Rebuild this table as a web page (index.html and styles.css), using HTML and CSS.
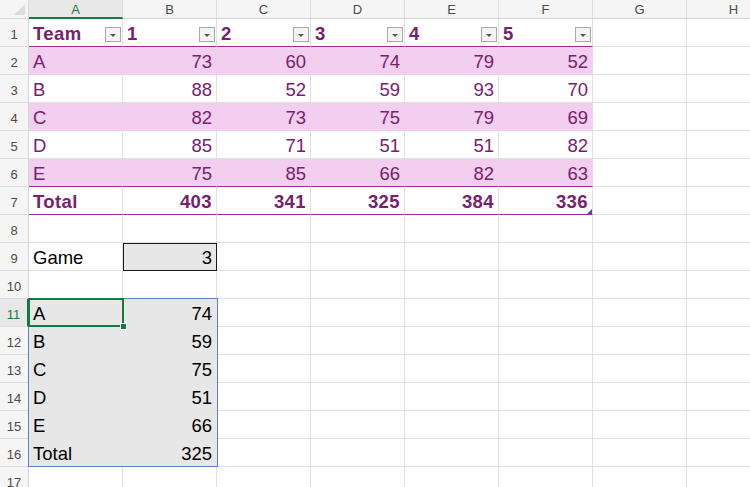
FILE: index.html
```html
<!DOCTYPE html>
<html>
<head>
<meta charset="utf-8">
<link rel="stylesheet" href="styles.css">
</head>
<body>
<div class="sheet">
  <div class="corner"><span class="corner-tri"></span></div>
  <div class="ch sel-col">A</div><div class="ch">B</div><div class="ch">C</div><div class="ch">D</div><div class="ch">E</div><div class="ch">F</div><div class="ch">G</div><div class="ch">H</div>

  <div class="rh">1</div>
  <div class="c th"><span>Team</span><span class="fb"></span></div>
  <div class="c th"><span>1</span><span class="fb"></span></div>
  <div class="c th"><span>2</span><span class="fb"></span></div>
  <div class="c th"><span>3</span><span class="fb"></span></div>
  <div class="c th"><span>4</span><span class="fb"></span></div>
  <div class="c th"><span>5</span><span class="fb"></span></div>
  <div class="c"></div><div class="c"></div>

  <div class="rh">2</div>
  <div class="c tb band">A</div><div class="c tb band r">73</div><div class="c tb band r">60</div><div class="c tb band r">74</div><div class="c tb band r">79</div><div class="c tb band r">52</div>
  <div class="c"></div><div class="c"></div>

  <div class="rh">3</div>
  <div class="c tb">B</div><div class="c tb r">88</div><div class="c tb r">52</div><div class="c tb r">59</div><div class="c tb r">93</div><div class="c tb r">70</div>
  <div class="c"></div><div class="c"></div>

  <div class="rh">4</div>
  <div class="c tb band">C</div><div class="c tb band r">82</div><div class="c tb band r">73</div><div class="c tb band r">75</div><div class="c tb band r">79</div><div class="c tb band r">69</div>
  <div class="c"></div><div class="c"></div>

  <div class="rh">5</div>
  <div class="c tb">D</div><div class="c tb r">85</div><div class="c tb r">71</div><div class="c tb r">51</div><div class="c tb r">51</div><div class="c tb r">82</div>
  <div class="c"></div><div class="c"></div>

  <div class="rh">6</div>
  <div class="c tb band last">E</div><div class="c tb band last r">75</div><div class="c tb band last r">85</div><div class="c tb band last r">66</div><div class="c tb band last r">82</div><div class="c tb band last r">63</div>
  <div class="c"></div><div class="c"></div>

  <div class="rh">7</div>
  <div class="c tt">Total</div><div class="c tt r">403</div><div class="c tt r">341</div><div class="c tt r">325</div><div class="c tt r">384</div><div class="c tt r end">336<span class="resize"></span></div>
  <div class="c"></div><div class="c"></div>

  <div class="rh">8</div>
  <div class="c"></div><div class="c"></div><div class="c"></div><div class="c"></div><div class="c"></div><div class="c"></div><div class="c"></div><div class="c"></div>

  <div class="rh">9</div>
  <div class="c">Game</div><div class="c r game">3</div><div class="c"></div><div class="c"></div><div class="c"></div><div class="c"></div><div class="c"></div><div class="c"></div>

  <div class="rh">10</div>
  <div class="c"></div><div class="c"></div><div class="c"></div><div class="c"></div><div class="c"></div><div class="c"></div><div class="c"></div><div class="c"></div>

  <div class="rh sel-row">11</div>
  <div class="c sp">A</div><div class="c sp r">74</div><div class="c"></div><div class="c"></div><div class="c"></div><div class="c"></div><div class="c"></div><div class="c"></div>

  <div class="rh">12</div>
  <div class="c sp">B</div><div class="c sp r">59</div><div class="c"></div><div class="c"></div><div class="c"></div><div class="c"></div><div class="c"></div><div class="c"></div>

  <div class="rh">13</div>
  <div class="c sp">C</div><div class="c sp r">75</div><div class="c"></div><div class="c"></div><div class="c"></div><div class="c"></div><div class="c"></div><div class="c"></div>

  <div class="rh">14</div>
  <div class="c sp">D</div><div class="c sp r">51</div><div class="c"></div><div class="c"></div><div class="c"></div><div class="c"></div><div class="c"></div><div class="c"></div>

  <div class="rh">15</div>
  <div class="c sp">E</div><div class="c sp r">66</div><div class="c"></div><div class="c"></div><div class="c"></div><div class="c"></div><div class="c"></div><div class="c"></div>

  <div class="rh">16</div>
  <div class="c sp">Total</div><div class="c sp r">325</div><div class="c"></div><div class="c"></div><div class="c"></div><div class="c"></div><div class="c"></div><div class="c"></div>

  <div class="rh">17</div>
  <div class="c"></div><div class="c"></div><div class="c"></div><div class="c"></div><div class="c"></div><div class="c"></div><div class="c"></div><div class="c"></div>

  <div class="spill"></div>
  <div class="selection"><span class="handle"></span></div>
</div>
</body>
</html>
```

FILE: styles.css
```css
html, body {
  margin: 0;
  padding: 0;
  background: #ffffff;
  overflow: hidden;
}

.sheet {
  position: relative;
  display: grid;
  grid-template-columns: 29px repeat(8, 94px);
  grid-template-rows: 19px repeat(17, 28px);
  font-family: "Liberation Sans", Arial, sans-serif;
  width: 781px;
}

.corner {
  position: relative;
  background: #f5f5f5;
  border-right: 1px solid #d6d6d6;
  border-bottom: 1px solid #d6d6d6;
}

.corner-tri {
  position: absolute;
  right: 3px;
  bottom: 3px;
  width: 0;
  height: 0;
  border-left: 11px solid transparent;
  border-bottom: 11px solid #dcdcdc;
}

.ch {
  background: #f5f5f5;
  border-right: 1px solid #dcdcdc;
  border-bottom: 1px solid #d6d6d6;
  color: #4a4a4a;
  font-size: 13px;
  display: flex;
  align-items: center;
  justify-content: center;
  padding-top: 1px;
}

.sel-col {
  background: #e8e8e8;
  color: #107c41;
  border-bottom: 2px solid #107c41;
}

.rh {
  background: #f5f5f5;
  border-right: 1px solid #d6d6d6;
  border-bottom: 1px solid #dcdcdc;
  color: #4a4a4a;
  font-size: 13px;
  display: flex;
  align-items: flex-end;
  justify-content: center;
  padding-bottom: 4px;
}

.sel-row {
  background: #e8e8e8;
  color: #107c41;
  border-right: 2px solid #107c41;
}

.c {
  border-right: 1px solid #e1e1e1;
  border-bottom: 1px solid #e1e1e1;
  display: flex;
  align-items: flex-end;
  padding: 0 4px 1px 4px;
  font-size: 18.5px;
  color: #000000;
  white-space: nowrap;
  overflow: hidden;
  position: relative;
}

.r {
  justify-content: flex-end;
}

.th {
  color: #78206e;
  font-weight: bold;
  justify-content: space-between;
  border-bottom: 1px solid #a02b93;
  letter-spacing: 0.4px;
  padding-right: 1px;
}

.fb {
  width: 14px;
  height: 13px;
  border: 1px solid #a8a8a8;
  background: #f4f4f4;
  margin-bottom: 3px;
  position: relative;
  flex: none;
}

.fb::after {
  content: "";
  position: absolute;
  left: 4px;
  top: 6px;
  width: 0;
  height: 0;
  border-left: 3px solid transparent;
  border-right: 3px solid transparent;
  border-top: 3px solid #555555;
}

.tb {
  color: #78206e;
}

.band {
  background: #f2ceef;
  border-right-color: #f2ceef;
  border-bottom-color: #f2ceef;
}

.last {
  border-bottom: 1px solid #a02b93;
}

.tt {
  color: #78206e;
  font-weight: bold;
  border-bottom: 1px solid #a02b93;
  letter-spacing: 0.4px;
}

.resize {
  position: absolute;
  right: 0;
  bottom: 0;
  width: 0;
  height: 0;
  border-left: 5px solid transparent;
  border-bottom: 5px solid #4b4a9a;
}

.game {
  background: #e7e7e7;
  outline: 1px solid #1a1a1a;
  outline-offset: -1px;
  border-color: transparent;
}

.sp {
  background: #e7e7e7;
  border-right-color: #e7e7e7;
  border-bottom-color: #e7e7e7;
}

.spill {
  position: absolute;
  left: 28px;
  top: 298px;
  width: 188px;
  height: 167px;
  border: 1px solid #5b7fc0;
  pointer-events: none;
}

.selection {
  position: absolute;
  left: 28px;
  top: 298px;
  width: 92px;
  height: 25px;
  border: 2px solid #107c41;
  pointer-events: none;
}

.handle {
  position: absolute;
  right: -5px;
  bottom: -5px;
  width: 5px;
  height: 5px;
  background: #107c41;
  border: 1px solid #ffffff;
}
```
